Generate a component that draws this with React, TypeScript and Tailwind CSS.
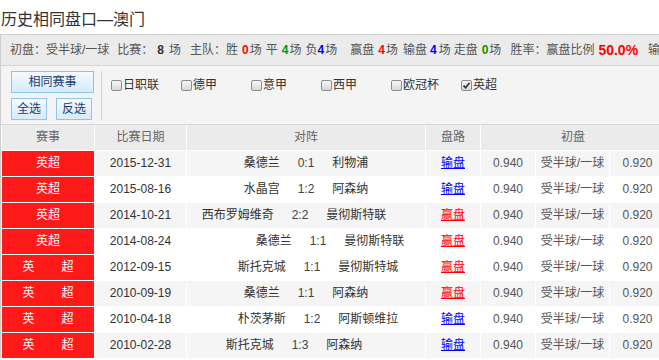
import React from "react";

type Row = {
  date: string;
  home: string;
  score: string;
  away: string;
  result: "输盘" | "赢盘";
  spaced: boolean;
  gray: boolean;
};

const rows: Row[] = [
  { date: "2015-12-31", home: "桑德兰", score: "0:1", away: "利物浦", result: "输盘", spaced: false, gray: true },
  { date: "2015-08-16", home: "水晶宫", score: "1:2", away: "阿森纳", result: "输盘", spaced: false, gray: false },
  { date: "2014-10-21", home: "西布罗姆维奇", score: "2:2", away: "曼彻斯特联", result: "赢盘", spaced: false, gray: true },
  { date: "2014-08-24", home: "桑德兰", score: "1:1", away: "曼彻斯特联", result: "赢盘", spaced: false, gray: false },
  { date: "2012-09-15", home: "斯托克城", score: "1:1", away: "曼彻斯特城", result: "赢盘", spaced: true, gray: false },
  { date: "2010-09-19", home: "桑德兰", score: "1:1", away: "阿森纳", result: "赢盘", spaced: true, gray: true },
  { date: "2010-04-18", home: "朴茨茅斯", score: "1:2", away: "阿斯顿维拉", result: "输盘", spaced: true, gray: false },
  { date: "2010-02-28", home: "斯托克城", score: "1:3", away: "阿森纳", result: "输盘", spaced: true, gray: true },
];

const leagues = [
  { name: "日职联", checked: false },
  { name: "德甲", checked: false },
  { name: "意甲", checked: false },
  { name: "西甲", checked: false },
  { name: "欧冠杯", checked: false },
  { name: "英超", checked: true },
];

function Checkbox({ checked }: { checked: boolean }) {
  return (
    <span className="relative w-[11px] h-[11px] rounded-[2px] border border-[#8e8e8e] bg-gradient-to-b from-[#f6f6f6] to-[#d8d8d8] flex items-center justify-center">
      {checked && (
        <svg width="9" height="9" viewBox="0 0 9 9">
          <path d="M1.5 4.6 L3.6 6.8 L7.6 1.8" stroke="#333" strokeWidth="1.7" fill="none" />
        </svg>
      )}
    </span>
  );
}

const cols = "grid grid-cols-[92px_91px_238px_54px_54px_73px_55px] gap-x-px pl-px";

export default function App() {
  return (
    <div className="w-[659px] h-[360px] overflow-hidden bg-white font-['Liberation_Sans','Noto_Sans_CJK_SC',sans-serif] text-[12px]">
      <div className="w-[700px]">
        <div className="h-[34px] pt-[8px] pl-px text-[16px] leading-[24px] text-[#333]">历史相同盘口—澳门</div>
        <div className="border-l border-t border-[#cfcfcf]">
          <div className="h-[31px] border-b border-[#d6d6d6] bg-[#ebebeb] pl-[9px] flex items-center text-[#555] whitespace-nowrap leading-[30px]">
            <span>初盘：受半球/一球</span>
            <span className="ml-[8px]">比赛：</span>
            <b className="ml-[4px] text-[#333]">8</b>
            <span className="ml-[5px]">场</span>
            <span className="ml-[9px]">主队：胜</span>
            <b className="ml-[4px] text-[#ff0000]">0</b>
            <span className="ml-[1px]">场</span>
            <span className="ml-[4px]">平</span>
            <b className="ml-[4px] text-[#009900]">4</b>
            <span className="ml-[1px]">场</span>
            <span className="ml-[4px]">负</span>
            <b className="text-[#0000ff]">4</b>
            <span className="ml-[1px]">场</span>
            <span className="ml-[13px]">赢盘</span>
            <b className="ml-[4px] text-[#ff0000]">4</b>
            <span className="ml-[1px]">场</span>
            <span className="ml-[5px]">输盘</span>
            <b className="ml-[3px] text-[#0000ff]">4</b>
            <span className="ml-[2px]">场</span>
            <span className="ml-[3px]">走盘</span>
            <b className="ml-[4px] text-[#009900]">0</b>
            <span className="ml-[1px]">场</span>
            <span className="ml-[9px]">胜率：赢盘比例</span>
            <b className="ml-[4px] text-[#ff0000] text-[14px]">50.0%</b>
            <span className="ml-[10px]">输</span>
          </div>
          <div className="h-[59px] border-b border-[#d6d6d6] bg-[#f4f4f4] flex pl-[10px] pt-[5px]">
            <div className="flex flex-col gap-[5px] w-[83px]">
              <button className="h-[22px] w-[83px] border border-[#8cc5ee] bg-gradient-to-b from-[#f4faff] to-[#d5ebfc] text-[#1d3d70] text-[12px] leading-[20px]">相同赛事</button>
              <div className="flex gap-[9px]">
                <button className="h-[22px] w-[36px] border border-[#8cc5ee] bg-gradient-to-b from-[#f4faff] to-[#d5ebfc] text-[#1d3d70] text-[12px] leading-[20px]">全选</button>
                <button className="h-[22px] w-[36px] border border-[#8cc5ee] bg-gradient-to-b from-[#f4faff] to-[#d5ebfc] text-[#1d3d70] text-[12px] leading-[20px]">反选</button>
              </div>
            </div>
            <div className="ml-[7px] w-px h-[49px] bg-[#d2d2d2]" />
            <div className="flex pl-[9px] pt-[8px] items-start">
              {leagues.map((l) => (
                <label key={l.name} className="w-[70px] h-[13px] flex items-center gap-[1px] text-[#333] leading-[13px]">
                  <Checkbox checked={l.checked} />
                  <span>{l.name}</span>
                </label>
              ))}
            </div>
          </div>
          <div className="flex flex-col gap-y-px bg-white">
            <div className={`${cols} h-[25px] leading-[25px] text-[#666] text-center`}>
              <div className="bg-[#ebebeb]">赛事</div>
              <div className="bg-[#ebebeb]">比赛日期</div>
              <div className="bg-[#ebebeb]">对阵</div>
              <div className="bg-[#ebebeb]">盘路</div>
              <div className="col-span-3 bg-[#ebebeb]">初盘</div>
            </div>
            {rows.map((r) => {
              const bg = r.gray ? "bg-[#f5f5f5]" : "bg-white";
              const shift = (r.away.length - r.home.length) * 12;
              return (
                <div key={r.date} className={`${cols} h-[25px] leading-[25px] text-center`}>
                  <div className="bg-[#ff1a1a] text-white flex justify-center">
                    {r.spaced ? (
                      <span className="flex gap-[27px]">
                        <span>英</span>
                        <span>超</span>
                      </span>
                    ) : (
                      <span>英超</span>
                    )}
                  </div>
                  <div className={`${bg} text-[#333]`}>{r.date}</div>
                  <div className={`${bg} text-[#333] flex justify-center`}>
                    <div className="flex gap-[18px]" style={{ transform: `translateX(${shift}px)` }}>
                      <span>{r.home}</span>
                      <span className="text-[#444]">{r.score}</span>
                      <span>{r.away}</span>
                    </div>
                  </div>
                  <div className={bg}>
                    <span className={`underline underline-offset-[1px] ${r.result === "输盘" ? "text-[#0000ff]" : "text-[#ff0000]"}`}>{r.result}</span>
                  </div>
                  <div className={`${bg} text-[#555]`}>0.940</div>
                  <div className={`${bg} text-[#555]`}>受半球/一球</div>
                  <div className={`${bg} text-[#555]`}>0.920</div>
                </div>
              );
            })}
          </div>
        </div>
      </div>
    </div>
  );
}
